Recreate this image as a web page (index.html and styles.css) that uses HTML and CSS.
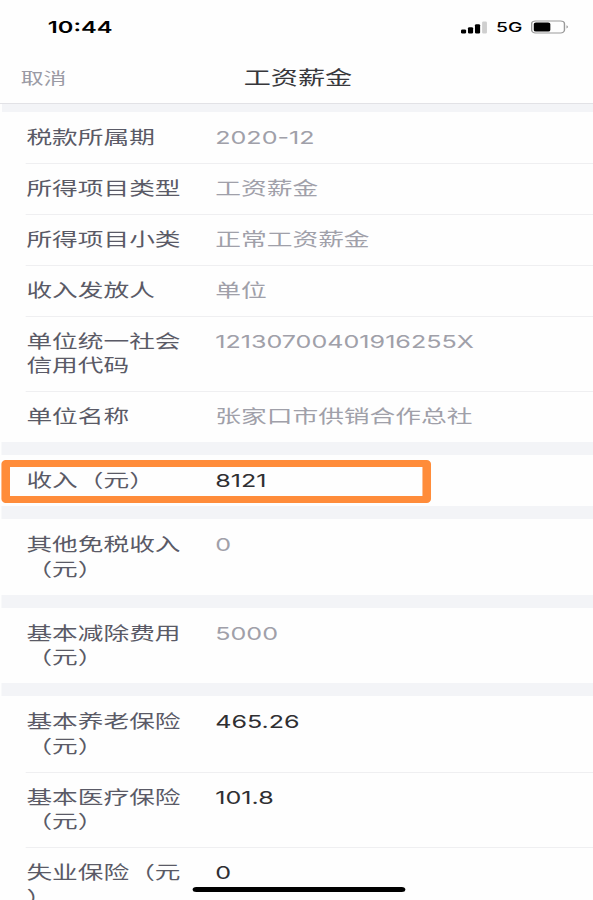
FILE: index.html
```html
<!DOCTYPE html>
<html lang="zh-CN">
<head>
    <meta charset="UTF-8">
    <meta name="viewport" content="width=device-width, initial-scale=1.0">
    <title>工资薪金</title>
    <link rel="stylesheet" href="styles.css">
</head>
<body>
    <div class="screen">
        <div class="status-bar">
            <span class="time">10:44</span>
            <div class="status-icons">
                <svg class="signal" width="19" height="13" viewBox="0 0 19 13">
                    <rect x="0" y="8.5" width="3.6" height="4" rx="1"/>
                    <rect x="4.9" y="6.3" width="3.6" height="6.2" rx="1"/>
                    <rect x="9.8" y="3.2" width="3.6" height="9.3" rx="1"/>
                    <rect x="14.8" y="0.5" width="3.4" height="12" rx="1" fill="#cfcfcf"/>
                </svg>
                <span class="network">5G</span>
                <svg class="battery" width="27" height="14" viewBox="0 0 27 14">
                    <rect x="0.5" y="0.9" width="23" height="12" rx="2.8" fill="none" stroke="#999"/>
                    <rect x="2" y="2.6" width="11.6" height="8.8" rx="1.5"/>
                    <path d="M25 5.2 Q26.6 6.9 25 8.6 Z" fill="#777"/>
                </svg>
            </div>
        </div>
        <div class="header">
            <span class="cancel">取消</span>
            <span class="title">工资薪金</span>
        </div>

        <div class="group">
            <div class="row"><span class="label">税款所属期</span><span class="value num">2020-12</span></div>
            <div class="row"><span class="label">所得项目类型</span><span class="value">工资薪金</span></div>
            <div class="row"><span class="label">所得项目小类</span><span class="value">正常工资薪金</span></div>
            <div class="row"><span class="label">收入发放人</span><span class="value">单位</span></div>
            <div class="row"><span class="label">单位统一社会信用代码</span><span class="value num">12130700401916255X</span></div>
            <div class="row"><span class="label">单位名称</span><span class="value">张家口市供销合作总社</span></div>
        </div>
        <div class="group">
            <div class="row"><span class="label">收入（元）</span><span class="value num dark">8121</span></div>
            <div class="highlight"></div>
        </div>
        <div class="group">
            <div class="row"><span class="label">其他免税收入（元）</span><span class="value num">0</span></div>
        </div>
        <div class="group">
            <div class="row"><span class="label">基本减除费用（元）</span><span class="value num">5000</span></div>
        </div>
        <div class="group">
            <div class="row"><span class="label">基本养老保险（元）</span><span class="value num dark">465.26</span></div>
            <div class="row"><span class="label">基本医疗保险（元）</span><span class="value num dark">101.8</span></div>
            <div class="row"><span class="label">失业保险（元）</span><span class="value num dark">0</span></div>
        </div>
        <div class="home-bar"></div>
    </div>
</body>
</html>
```
FILE: styles.css
```css
html, body {
    margin: 0;
    height: 900px;
    overflow: hidden;
    background-color: #fefefe;
}
.screen {
    position: relative;
    width: 415.5px;
    height: 900px;
    overflow: hidden;
    transform: scaleX(1.4272);
    transform-origin: 0 0;
    font-family: Inter, "Noto Sans CJK SC", sans-serif;
    font-size: 18px;
    line-height: 24.5px;
    color: #5a5a66;
}
.status-bar {
    display: flex;
    justify-content: space-between;
    align-items: center;
    height: 54px;
    box-sizing: border-box;
    padding: 0 17px 0 33.5px;
    color: #000;
}
.time {
    font-size: 16.6px;
    font-weight: 600;
}
.status-icons {
    display: flex;
    align-items: center;
}
.network {
    font-size: 13.5px;
    font-weight: 500;
    margin: 1px 5.5px 0 5.5px;
}
.header {
    display: flex;
    justify-content: center;
    align-items: center;
    position: relative;
    height: 49px;
    border-bottom: 1px solid #e2e2e6;
    margin-bottom: 7.5px;
    box-shadow: 1.4px 8px 0 #f3f4f7;
}
.title {
    font-size: 19px;
    color: #37373b;
    padding: 2px 0 0 2px;
}
.cancel {
    position: absolute;
    left: 14.5px;
    font-size: 16px;
    color: #9a9aa4;
}
.group {
    position: relative;
    margin-left: 1.4px;
    border-bottom: 13.5px solid #f3f4f7;
}
.row {
    display: flex;
    position: relative;
    padding: 14.25px 0 12.25px 17.1px;
}
.row + .row::before {
    content: "";
    position: absolute;
    top: 0;
    left: 16.6px;
    right: 0;
    height: 1px;
    background-color: #efeff1;
}
.label {
    width: 109px;
    margin-right: 23.3px;
    line-break: anywhere;
}
.value {
    font-size: 18.05px;
    color: #a0a0a9;
}
.num {
    font-size: 17.6px;
}
.dark {
    color: #2f2f32;
}
.highlight {
    position: absolute;
    top: 5px;
    left: -0.7px;
    width: 301.5px;
    height: 43px;
    box-sizing: border-box;
    border: solid #ff8c3a;
    border-width: 7px 6px;
    border-radius: 3px / 4px;
}
.home-bar {
    position: absolute;
    left: 135px;
    bottom: 8px;
    width: 149px;
    height: 5.5px;
    border-radius: 3px;
    background-color: #000;
}
```
